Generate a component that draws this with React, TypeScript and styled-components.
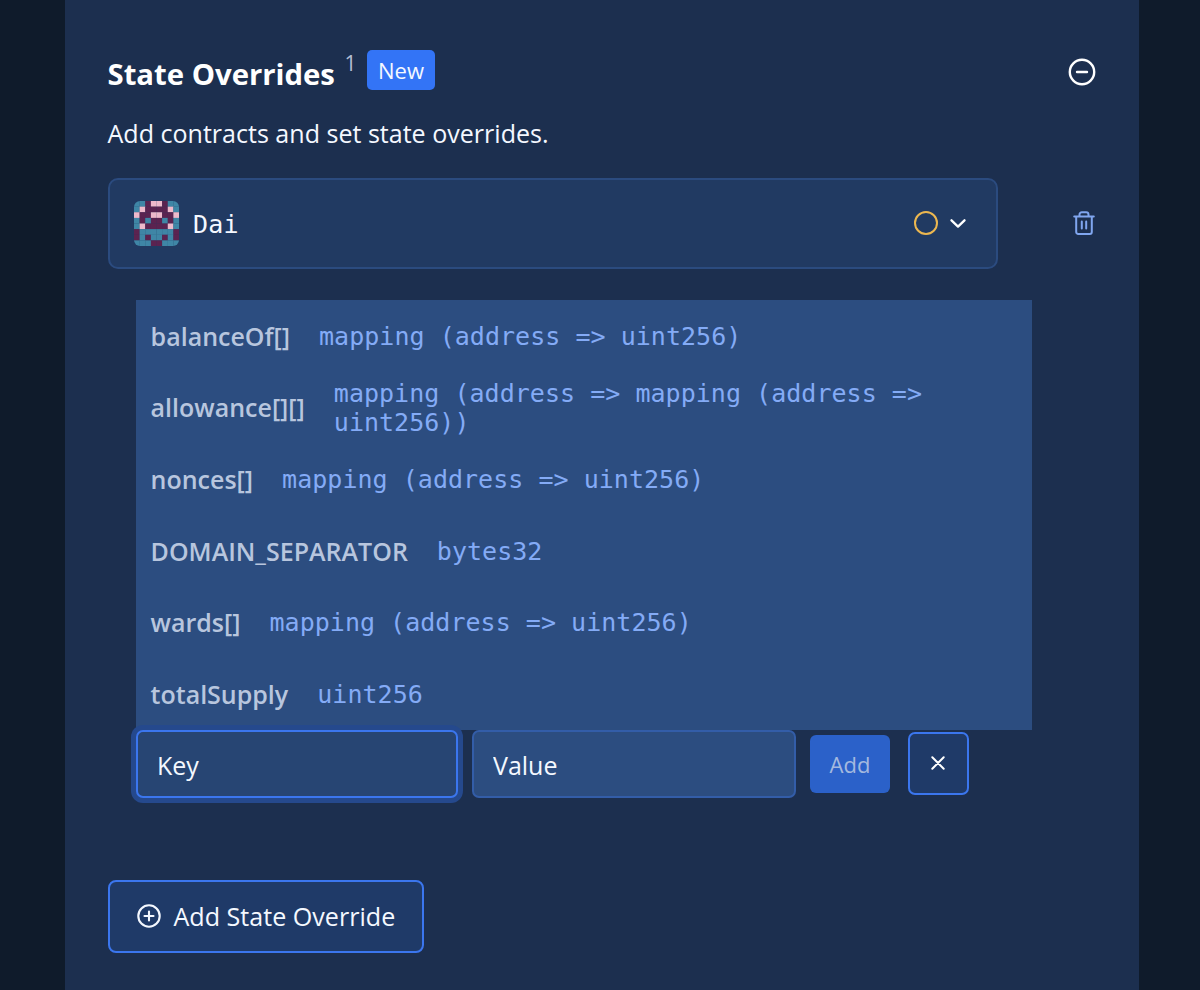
import React from "react";
import styled, { createGlobalStyle } from "styled-components";

const sans = `"Open Sans", "Noto Sans", sans-serif`;
const mono = `"DejaVu Sans Mono", "Liberation Mono", monospace`;

const GlobalStyle = createGlobalStyle`
  *, *::before, *::after { box-sizing: border-box; }
  body { margin: 0; background: #0f1b2b; font-family: ${sans}; color: #f4f8ff; }
  button, input { font: inherit; color: inherit; margin: 0; }
  svg { display: block; flex: none; }
`;

const Page = styled.div`
  height: 990px;
  overflow: hidden;
  padding: 0 61px 0 64.5px;
  background: #0f1b2b;
`;

const Panel = styled.main`
  height: 100%;
  padding: 50px 43px 0;
  background: #1c2f4f;
`;

const Header = styled.header`
  display: flex;
  align-items: flex-start;
  height: 68px;
`;

const Title = styled.h1`
  margin: 4px 0 0;
  width: 228px;
  font-size: 29.3px;
  line-height: 40px;
  font-weight: 700;
  white-space: nowrap;
  color: #fff;
`;

const Count = styled.span`
  width: 12px;
  margin-left: 9px;
  font-size: 21px;
  line-height: 26px;
  color: #b3bed3;
`;

const Badge = styled.span`
  margin-left: 10.5px;
  width: 68px;
  height: 40px;
  border-radius: 5px;
  background: #3374f6;
  font-size: 22px;
  line-height: 41px;
  font-weight: 500;
  text-align: center;
`;

const CollapseButton = styled.button`
  margin: 8px 0 0 auto;
  padding: 0;
  border: 0;
  background: none;
`;

const Description = styled.p`
  margin: 0;
  height: 60px;
  font-size: 25.05px;
  line-height: 31px;
`;

const ContractRow = styled.div`
  display: flex;
  align-items: center;
  justify-content: space-between;
  height: 91px;
`;

const ContractCard = styled.div`
  display: flex;
  align-items: center;
  width: 890px;
  height: 91px;
  padding: 0 30px 0 24px;
  border: 2px solid #2b4b7f;
  border-radius: 10px;
  background: #213a62;
`;

const Avatar = styled.svg`
  border-radius: 6px;
`;

const ContractName = styled.span`
  margin-left: 14.5px;
  padding-top: 1px;
  font: 25px ${mono};
  letter-spacing: 0.2px;
  flex: 1;
`;

const StatusRing = styled.span`
  width: 24px;
  height: 24px;
  margin: 0 12px 1px 0;
  border: 2px solid #ecb750;
  border-radius: 50%;
`;

const DeleteButton = styled.button`
  padding: 0;
  margin: 0 1.5px 1px 0;
  border: 0;
  background: none;
`;

const Editor = styled.section`
  margin: 31px 0 0 28.5px;
`;

const Options = styled.ul`
  margin: 0;
  padding: 0;
  width: 896px;
  list-style: none;
  background: #2c4d80;
`;

const Option = styled.li`
  display: flex;
  align-items: center;
  gap: 29px;
  height: 71.6px;
  padding: 0 15px 0 14.6px;
`;

const OptionName = styled.span`
  font-size: 25px;
  font-weight: 600;
  white-space: nowrap;
  color: #b8c6de;
`;

const OptionType = styled.span`
  padding-top: 1px;
  font: 25px/29px ${mono};
  letter-spacing: 0.03px;
  color: #84abf6;
`;

const Form = styled.div`
  display: flex;
  align-items: center;
  height: 68px;
`;

const Field = styled.input<{ $active?: boolean; $width: number }>`
  width: ${(p) => p.$width}px;
  height: 68px;
  padding: 2px 19px 0;
  border: 2px solid ${(p) => (p.$active ? "#3b76ee" : "#335da8")};
  border-radius: 7px;
  background: ${(p) => (p.$active ? "#274573" : "#2c4d80")};
  box-shadow: ${(p) => (p.$active ? "0 0 0 5px #25498d" : "none")};
  font-size: 25px;
  outline: 0;

  & + & { margin-left: 14px; }
  &::placeholder { color: #f4f8ff; opacity: 1; }
`;

const AddButton = styled.button`
  margin-left: 14px;
  padding: 0;
  width: 80px;
  height: 58px;
  border: 0;
  border-radius: 6px;
  background: #2b61c9;
  font-size: 22px;
  color: #a3b9df;
`;

const CancelButton = styled.button`
  display: grid;
  place-items: center;
  margin-left: 18px;
  padding: 0 1px 1px 0;
  width: 61px;
  height: 63px;
  border: 2px solid #3b76ee;
  border-radius: 7px;
  background: #1f3a68;
`;

const AddOverride = styled.button`
  display: flex;
  align-items: center;
  gap: 13px;
  margin-top: 82px;
  padding: 0 27px;
  width: 316px;
  height: 73px;
  border: 2px solid #3b76ee;
  border-radius: 8px;
  background: #1f3a68;
  font-size: 25.1px;
  white-space: nowrap;
`;

const colors: Record<string, string> = { T: "#3f86a6", M: "#5b2350", P: "#eeb9cb" };
const half = ["TTMP", "TPMM", "PMMP", "TMTM", "TPMM", "MTTT", "MTMT", "TTTM"];

const Blockie = () => (
  <Avatar width="45" height="45" viewBox="0 0 8 8">
    {half.map((row, y) =>
      [...row, ...[...row].reverse()].map((c, x) => (
        <rect key={`${x}-${y}`} x={x} y={y} width="1.02" height="1.02" fill={colors[c]} />
      ))
    )}
  </Avatar>
);

const options = [
  ["balanceOf[]", "mapping (address => uint256)"],
  ["allowance[][]", "mapping (address => mapping (address => uint256))"],
  ["nonces[]", "mapping (address => uint256)"],
  ["DOMAIN_SEPARATOR", "bytes32"],
  ["wards[]", "mapping (address => uint256)"],
  ["totalSupply", "uint256"],
];

export default function App() {
  return (
    <>
      <GlobalStyle />
      <Page>
        <Panel>
          <Header>
            <Title>State Overrides</Title>
            <Count>1</Count>
            <Badge>New</Badge>
            <CollapseButton aria-label="Collapse">
              <svg width="28" height="28" viewBox="0 0 28 28" fill="none" stroke="#fff" strokeWidth="2.4" strokeLinecap="round">
                <circle cx="14" cy="14" r="12.2" />
                <path d="M9 14h10" />
              </svg>
            </CollapseButton>
          </Header>
          <Description>Add contracts and set state overrides.</Description>
          <ContractRow>
            <ContractCard>
              <Blockie />
              <ContractName>Dai</ContractName>
              <StatusRing />
              <svg width="16" height="10" viewBox="0 0 16 10" fill="none" stroke="#fff" strokeWidth="2.3" strokeLinecap="round" strokeLinejoin="round">
                <path d="M1.5 1.3L8 7.6l6.5-6.3" />
              </svg>
            </ContractCard>
            <DeleteButton aria-label="Delete">
              <svg width="22" height="24" viewBox="0 0 22 24" fill="none" stroke="#80a6ef" strokeWidth="2" strokeLinecap="round" strokeLinejoin="round">
                <path d="M1.2 5.5h19.6M3.2 5.5v15.4a2 2 0 0 0 2 2h11.6a2 2 0 0 0 2-2V5.5M6.5 5.3V3.6a2.4 2.4 0 0 1 2.4-2.4h4.2a2.4 2.4 0 0 1 2.4 2.4v1.7M8.8 10.5v7M13.2 10.5v7" />
              </svg>
            </DeleteButton>
          </ContractRow>
          <Editor>
            <Options>
              {options.map(([name, type]) => (
                <Option key={name}>
                  <OptionName>{name}</OptionName>
                  <OptionType>{type}</OptionType>
                </Option>
              ))}
            </Options>
            <Form>
              <Field $active $width={322} placeholder="Key" />
              <Field $width={324} placeholder="Value" />
              <AddButton>Add</AddButton>
              <CancelButton aria-label="Cancel">
                <svg width="14" height="14" viewBox="0 0 14 14" fill="none" stroke="#fff" strokeWidth="2" strokeLinecap="round">
                  <path d="M1.3 1.3l11.4 11.4M12.7 1.3L1.3 12.7" />
                </svg>
              </CancelButton>
            </Form>
          </Editor>
          <AddOverride>
            <svg width="24" height="24" viewBox="0 0 24 24" fill="none" stroke="#f4f8ff" strokeWidth="2.1" strokeLinecap="round">
              <circle cx="12" cy="12" r="10.7" />
              <path d="M12 7.5v9M7.5 12h9" />
            </svg>
            Add State Override
          </AddOverride>
        </Panel>
      </Page>
    </>
  );
}
